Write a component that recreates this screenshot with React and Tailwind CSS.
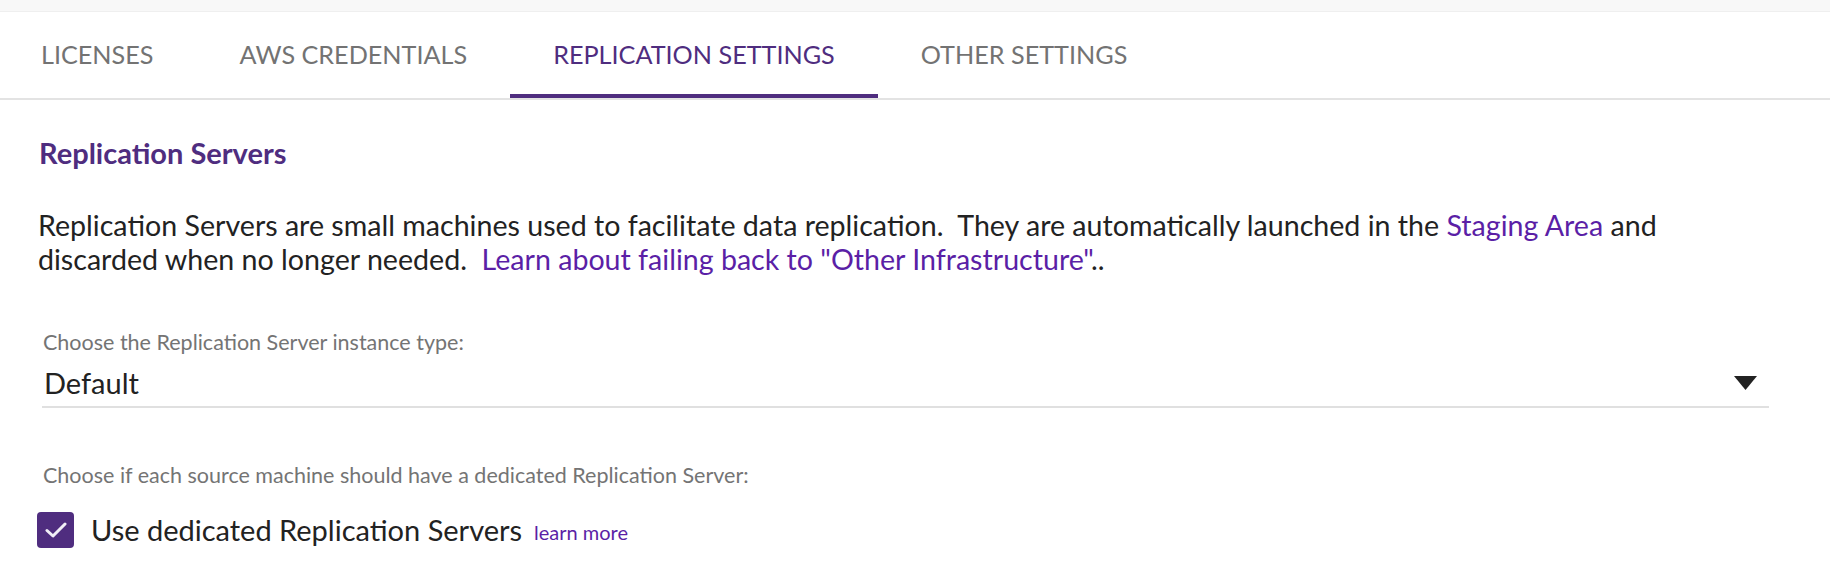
import React from 'react'

const tabs = ['Licenses', 'AWS Credentials', 'Replication Settings', 'Other Settings']

function Tabs({ active }) {
  return (
    <div className="flex h-[88px] border-b-2 border-[#e3e3e3] -ml-[2px]">
      {tabs.map((t) => (
        <div
          key={t}
          className={
            t === active
              ? 'flex items-center px-[43px] pt-[4px] border-b-4 border-[#4f2d7f] text-[#4f2d7f] uppercase text-[25.2px]'
              : 'flex items-center px-[43px] pt-[4px] border-b-4 border-transparent text-[#737373] uppercase text-[25.2px]'
          }
        >
          {t}
        </div>
      ))}
    </div>
  )
}

function Caret() {
  return (
    <svg width="23" height="14" viewBox="0 0 23 14">
      <path d="M0 0 L23 0 L11.5 14 Z" fill="#222" />
    </svg>
  )
}

function Check() {
  return (
    <div className="w-[37px] h-[36px] rounded-[4px] bg-[#4f2d7f] flex items-center justify-center">
      <svg width="22" height="18" viewBox="0 0 22 18" fill="none">
        <path d="M2 9.5 L8 15 L20 3" stroke="#f1eef7" strokeWidth="3" strokeLinecap="round" strokeLinejoin="round" />
      </svg>
    </div>
  )
}

export default function App() {
  return (
    <div className="w-full h-[570px] bg-white overflow-hidden" style={{ fontFamily: 'Lato, "Open Sans", sans-serif' }}>
      <div className="h-[12px] bg-[#f8f8f8] border-b border-[#efefef]" />
      <Tabs active="Replication Settings" />

      <div className="pl-[40px] pr-[61px]">
        <h2 className="mt-[38px] text-[29px] leading-[30px] font-bold text-[#4f2d7f] -ml-[1px]">Replication Servers</h2>

        <p className="mt-[40px] text-[28.6px] leading-[34px] text-[#222] -ml-[2px]">
          Replication Servers are small machines used to facilitate data replication.{'\u00a0 '}They are automatically launched in the{' '}
          <a className="text-[#5b1fa6]">Staging Area</a> and discarded when no longer needed.{'\u00a0 '}
          <a className="text-[#5b1fa6]">Learn about failing back to "Other Infrastructure"</a>..
        </p>

        <div className="mt-[54px] ml-[3px] text-[21.5px] leading-[24px] text-[#747474]">Choose the Replication Server instance type:</div>
        <div className="mt-[13px] ml-[2px] flex items-center justify-between border-b-2 border-[#e0e0e0] pb-[7px] pr-[12px]">
          <span className="pl-[2px] text-[29px] leading-[32px] text-[#222]">Default</span>
          <Caret />
        </div>

        <div className="mt-[55px] ml-[3px] text-[21.5px] leading-[24px] text-[#747474]">Choose if each source machine should have a dedicated Replication Server:</div>
        <div className="mt-[25px] flex items-center -ml-[3px]">
          <Check />
          <span className="ml-[17px] text-[29px] leading-[32px] text-[#222]">Use dedicated Replication Servers</span>
          <a className="ml-[12px] mt-[4px] text-[20px] text-[#5b1fa6]">learn more</a>
        </div>
      </div>
    </div>
  )
}
